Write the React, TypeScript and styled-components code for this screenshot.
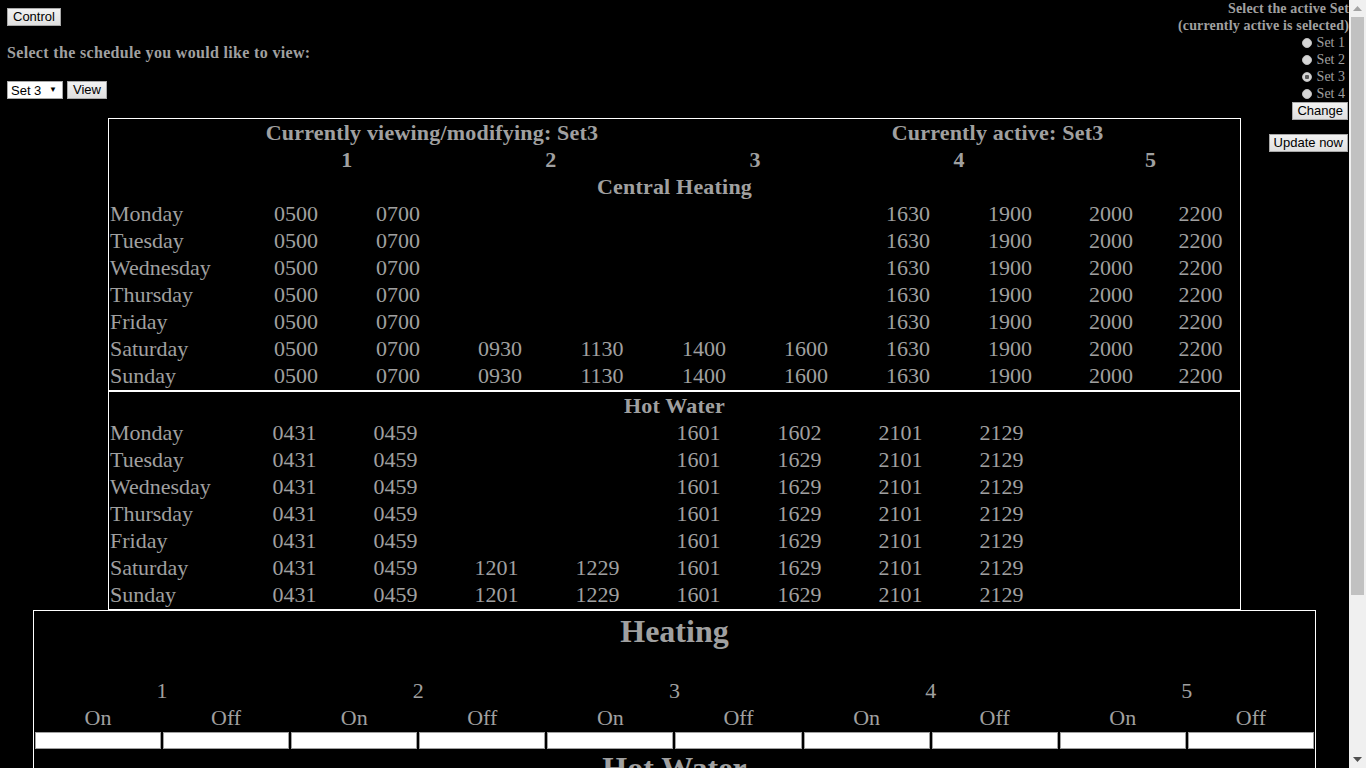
import styled, { createGlobalStyle } from 'styled-components';

const GlobalStyle = createGlobalStyle`
  html,
  body {
    margin: 0;
    height: 100%;
    overflow: hidden;
    background: #000;
  }
  body {
    color: #a0a0a0;
    font-family: "Liberation Serif", "Times New Roman", serif;
    font-size: 16px;
  }
`;

const Shell = styled.div`
  display: flex;
  height: 100vh;
`;

const Content = styled.div`
  flex: 1;
  min-width: 0;
  overflow-y: auto;
  scrollbar-width: none;
  box-sizing: border-box;
  padding: 8px;
  background: #000;

  &::-webkit-scrollbar {
    display: none;
  }
`;

const ScrollBar = styled.div`
  width: 17px;
  display: flex;
  flex-direction: column;
  background: #f0f0f0;
`;

const ScrollArrow = styled.div`
  height: 17px;
  display: flex;
  align-items: center;
  justify-content: center;
`;

const ScrollTrack = styled.div`
  flex: 1;
  padding: 0 2px;
`;

const ScrollThumb = styled.div`
  height: 578px;
  background: #c1c1c1;
`;

const Page = styled.div`
  display: grid;
  grid-template-columns: 7.5% 85% 7.5%;
`;

const TopLeft = styled.div`
  grid-column: 1 / 3;
  grid-row: 1;
  display: flex;
  flex-direction: column;
  align-items: flex-start;
  padding-bottom: 19px;
`;

const Button = styled.button<{ $pad?: number }>`
  height: 18px;
  padding: 0 ${(p) => p.$pad ?? 5}px;
  margin: 0;
  font-family: "Liberation Sans", Arial, sans-serif;
  font-size: 13px;
  line-height: 16px;
  color: #000;
  background: linear-gradient(#f2f2f2, #e0e0e0);
  border: 1px solid #a8a8a8;
  border-radius: 0;
  cursor: pointer;
`;

const ControlButton = styled(Button)`
  margin-left: -1px;
`;

const Prompt = styled.h4`
  margin: 18px 0 19px -1px;
  font-size: 16px;
  line-height: 18px;
  letter-spacing: 0.33px;
  font-weight: bold;
`;

const ViewRow = styled.div`
  display: flex;
  align-items: center;
  gap: 4px;
  margin-left: -1px;
`;

const SelectWrap = styled.div`
  position: relative;

  &::after {
    content: '▼';
    position: absolute;
    right: 6px;
    top: 4px;
    font-size: 8px;
    line-height: 9px;
    color: #000;
    pointer-events: none;
  }
`;

const SetSelect = styled.select`
  appearance: none;
  display: block;
  width: 56px;
  height: 18px;
  padding: 0 0 0 3px;
  font-family: "Liberation Sans", Arial, sans-serif;
  font-size: 13px;
  color: #000;
  background: #fff;
  border: 1px solid #a9a9a9;
  border-radius: 0;
`;

const RightPanel = styled.div`
  grid-column: 2 / 4;
  grid-row: 1 / 3;
  justify-self: end;
  align-self: start;
  z-index: 1;
  margin: -8px -8px 0 0;
  display: flex;
  flex-direction: column;
  align-items: flex-end;
  font-size: 14px;
  line-height: 17px;
  text-align: right;
  white-space: nowrap;
`;

const PanelTitle = styled.div`
  font-weight: bold;
  letter-spacing: 0.15px;
`;

const RadioRow = styled.label`
  display: flex;
  align-items: center;
  height: 17px;
  padding-right: 4px;
`;

const Radio = styled.input`
  appearance: none;
  width: 10px;
  height: 10px;
  margin: 0 5px 0 0;
  border-radius: 50%;
  border: 1px solid #bdbdbd;
  background: #d6d6d6;

  &:checked {
    background: radial-gradient(circle, #5a5a5a 0 2px, #d6d6d6 2.5px);
  }
`;

const PanelButton = styled(Button)<{ $gap?: number }>`
  margin-top: ${(p) => p.$gap ?? 0}px;
  margin-right: 1px;
`;

const Schedules = styled.div`
  grid-column: 2;
  grid-row: 2;
`;

const ScheduleTable = styled.table`
  width: 100%;
  border: 1px solid #fff;
  border-spacing: 0;
  padding-bottom: 1px;
  table-layout: fixed;
  font-size: 22px;
  line-height: 25px;
  color: #a0a0a0;

  th {
    padding: 1px;
    font-weight: bold;
    text-align: center;
    white-space: nowrap;
    letter-spacing: 0.2px;
  }
  td {
    padding: 1px;
    text-align: center;
    white-space: nowrap;
  }
`;

const DayCell = styled.td`
  && {
    text-align: left;
  }
`;

const ControlBox = styled.div`
  grid-column: 1 / -1;
  grid-row: 3;
  justify-self: center;
  width: 1283px;
  box-sizing: border-box;
  border: 1px solid #fff;
  padding: 2px 0 70px;
`;

const SectionTitle = styled.h1`
  margin: 0;
  font-size: 32px;
  line-height: 36px;
  font-weight: bold;
  text-align: center;
`;

const SwitchTable = styled.table`
  width: 100%;
  margin-top: 28px;
  border-spacing: 0;
  table-layout: fixed;
  font-size: 22px;
  line-height: 25px;
  color: #a0a0a0;

  td {
    padding: 1px;
    text-align: center;
  }
`;

const TimeInput = styled.input`
  display: block;
  width: 100%;
  height: 17px;
  box-sizing: border-box;
  margin: 0;
  padding: 0 2px;
  background: #fff;
  border: 1px solid #a0a0a0;
`;

const heating: [string, string[]][] = [
  ['Monday', ['0500', '0700', '', '', '', '', '1630', '1900', '2000', '2200']],
  ['Tuesday', ['0500', '0700', '', '', '', '', '1630', '1900', '2000', '2200']],
  ['Wednesday', ['0500', '0700', '', '', '', '', '1630', '1900', '2000', '2200']],
  ['Thursday', ['0500', '0700', '', '', '', '', '1630', '1900', '2000', '2200']],
  ['Friday', ['0500', '0700', '', '', '', '', '1630', '1900', '2000', '2200']],
  ['Saturday', ['0500', '0700', '0930', '1130', '1400', '1600', '1630', '1900', '2000', '2200']],
  ['Sunday', ['0500', '0700', '0930', '1130', '1400', '1600', '1630', '1900', '2000', '2200']],
];

const hotWater: [string, string[]][] = [
  ['Monday', ['0431', '0459', '', '', '1601', '1602', '2101', '2129', '', '']],
  ['Tuesday', ['0431', '0459', '', '', '1601', '1629', '2101', '2129', '', '']],
  ['Wednesday', ['0431', '0459', '', '', '1601', '1629', '2101', '2129', '', '']],
  ['Thursday', ['0431', '0459', '', '', '1601', '1629', '2101', '2129', '', '']],
  ['Friday', ['0431', '0459', '', '', '1601', '1629', '2101', '2129', '', '']],
  ['Saturday', ['0431', '0459', '1201', '1229', '1601', '1629', '2101', '2129', '', '']],
  ['Sunday', ['0431', '0459', '1201', '1229', '1601', '1629', '2101', '2129', '', '']],
];

const periods = [1, 2, 3, 4, 5];

const Cols = ({ widths }: { widths: number[] }) => (
  <colgroup>
    {widths.map((w, i) => (
      <col key={i} style={{ width: w ? `${w}px` : undefined }} />
    ))}
  </colgroup>
);

const DayRows = ({ rows }: { rows: [string, string[]][] }) => (
  <>
    {rows.map(([day, times]) => (
      <tr key={day}>
        <DayCell>{day}</DayCell>
        {times.map((t, i) => (
          <td key={i}>{t}</td>
        ))}
      </tr>
    ))}
  </>
);

const Switches = () => (
  <SwitchTable>
    <tbody>
      <tr>
        {periods.map((n) => (
          <td key={n} colSpan={2}>{n}</td>
        ))}
      </tr>
      <tr>
        {periods.map((n) => [
          <td key={`on${n}`}>On</td>,
          <td key={`off${n}`}>Off</td>,
        ])}
      </tr>
      <tr>
        {Array.from({ length: 10 }, (_, i) => (
          <td key={i}>
            <TimeInput type="text" />
          </td>
        ))}
      </tr>
    </tbody>
  </SwitchTable>
);

const Arrow = ({ up, color }: { up?: boolean; color: string }) => (
  <svg width="9" height="5" viewBox="0 0 9 5">
    <polygon points={up ? '0,5 9,5 4.5,0' : '0,0 9,0 4.5,5'} fill={color} />
  </svg>
);

const App = () => {
  return (
    <Shell>
      <GlobalStyle />
      <Content>
        <Page>
          <TopLeft>
            <ControlButton>Control</ControlButton>
            <Prompt>Select the schedule you would like to view:</Prompt>
            <ViewRow>
              <SelectWrap>
                <SetSelect defaultValue="3">
                  <option value="1">Set 1</option>
                  <option value="2">Set 2</option>
                  <option value="3">Set 3</option>
                  <option value="4">Set 4</option>
                </SetSelect>
              </SelectWrap>
              <Button>View</Button>
            </ViewRow>
          </TopLeft>

          <RightPanel>
            <PanelTitle>Select the active Set</PanelTitle>
            <PanelTitle>(currently active is selected)</PanelTitle>
            {[1, 2, 3, 4].map((n) => (
              <RadioRow key={n}>
                <Radio type="radio" name="active" defaultChecked={n === 3} />
                Set {n}
              </RadioRow>
            ))}
            <PanelButton $pad={4}>Change</PanelButton>
            <PanelButton $pad={4} $gap={14}>Update now</PanelButton>
          </RightPanel>

          <Schedules>
            <ScheduleTable>
              <Cols widths={[136, 102, 102, 102, 102, 102, 102, 102, 102, 100, 0]} />
              <tbody>
                <tr>
                  <th colSpan={6}>Currently viewing/modifying: Set3</th>
                  <th colSpan={5}>Currently active: Set3</th>
                </tr>
                <tr>
                  <th />
                  {periods.map((n) => (
                    <th key={n} colSpan={2}>{n}</th>
                  ))}
                </tr>
                <tr>
                  <th colSpan={11}>Central Heating</th>
                </tr>
                <DayRows rows={heating} />
              </tbody>
            </ScheduleTable>
            <ScheduleTable>
              <Cols widths={[135, 101, 101, 101, 101, 101, 101, 101, 101, 94, 0]} />
              <tbody>
                <tr>
                  <th colSpan={11}>Hot Water</th>
                </tr>
                <DayRows rows={hotWater} />
              </tbody>
            </ScheduleTable>
          </Schedules>

          <ControlBox>
            <SectionTitle>Heating</SectionTitle>
            <Switches />
            <SectionTitle>Hot Water</SectionTitle>
            <Switches />
          </ControlBox>
        </Page>
      </Content>
      <ScrollBar>
        <ScrollArrow>
          <Arrow up color="#a3a3a3" />
        </ScrollArrow>
        <ScrollTrack>
          <ScrollThumb />
        </ScrollTrack>
        <ScrollArrow>
          <Arrow color="#505050" />
        </ScrollArrow>
      </ScrollBar>
    </Shell>
  );
};

export default App;
